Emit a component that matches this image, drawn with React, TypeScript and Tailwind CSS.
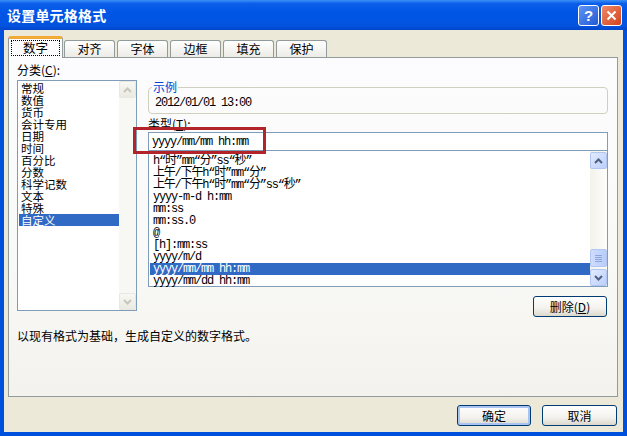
import type { ReactNode } from 'react'

const cjk = "font-['Noto_Sans_CJK_SC',sans-serif]"
const mono = "font-['Liberation_Mono','Noto_Sans_CJK_SC',monospace] tracking-[-1.2px]"

const categories = ['常规', '数值', '货币', '会计专用', '日期', '时间', '百分比', '分数', '科学记数', '文本', '特殊', '自定义']

const formats = [
  'h“时”mm“分”ss“秒”',
  '上午/下午h“时”mm“分”',
  '上午/下午h“时”mm“分”ss“秒”',
  'yyyy-m-d h:mm',
  'mm:ss',
  'mm:ss.0',
  '@',
  '[h]:mm:ss',
  'yyyy/m/d',
  'yyyy/mm/mm hh:mm',
  'yyyy/mm/dd hh:mm',
]

const tabs = ['对齐', '字体', '边框', '填充', '保护']

// small bold chevron used on the scroll arrows
function Chevron({ up, disabled }: { up?: boolean; disabled?: boolean }) {
  return (
    <svg width="9" height="6" viewBox="0 0 9 6">
      <path
        d={up ? 'M1 5 L4.5 1.5 L8 5' : 'M1 1 L4.5 4.5 L8 1'}
        fill="none"
        stroke={disabled ? '#c9c7ba' : '#4d6185'}
        strokeWidth="2"
      />
    </svg>
  )
}

function ArrowButton({ up, disabled }: { up?: boolean; disabled?: boolean }) {
  return (
    <div
      className={
        disabled
          ? 'w-[17px] h-[17px] flex items-center justify-center rounded-[2px] border border-[#e8e7e0] bg-[linear-gradient(180deg,#f8f8f4,#eae9e2)]'
          : 'w-[17px] h-[17px] flex items-center justify-center rounded-[2px] border border-[#b2c6f3] bg-[linear-gradient(135deg,#e2ebfe,#bccffa)]'
      }
    >
      <Chevron up={up} disabled={disabled} />
    </div>
  )
}

function XpButton({ children, primary, className = '' }: { children: ReactNode; primary?: boolean; className?: string }) {
  return (
    <button
      className={`h-[21px] rounded-[3px] border border-[#003c74] bg-[linear-gradient(180deg,#ffffff_0%,#f3f2ee_60%,#dcd8cc_100%)] flex items-center justify-center text-[12px] leading-[12px] ${
        primary ? 'shadow-[inset_0_0_0_2px_#aac3f0]' : ''
      } ${className}`}
    >
      {children}
    </button>
  )
}

function TitleBar() {
  return (
    <div className="h-[30px] shrink-0 flex items-center pl-[7px] pr-[5px] bg-[linear-gradient(180deg,#3d8ff7_0%,#0a5ee9_12%,#0055e5_45%,#0353e0_85%,#0045c9_100%)]">
      <span className={`${cjk} text-[14px] font-bold text-white tracking-[0.2px]`}>设置单元格格式</span>
      <div className="ml-auto flex gap-[2px]">
        <div className="w-[21px] h-[21px] rounded-[3px] border border-white bg-[linear-gradient(135deg,#5e95f5,#2259d6)] flex items-center justify-center">
          <span className="font-['Liberation_Sans',sans-serif] font-bold text-[15px] leading-none text-white">?</span>
        </div>
        <div className="w-[21px] h-[21px] rounded-[3px] border border-white bg-[linear-gradient(135deg,#f08a68,#d2421c)] flex items-center justify-center">
          <svg width="11" height="11" viewBox="0 0 11 11">
            <path d="M1.5 1.5 L9.5 9.5 M9.5 1.5 L1.5 9.5" stroke="#fff" strokeWidth="2" />
          </svg>
        </div>
      </div>
    </div>
  )
}

function Tabs() {
  return (
    <div className="h-[21px] flex items-end">
      {/* selected tab, overlaps the panel edge */}
      <div className="relative z-10 -mb-px w-[55px] h-[22px] rounded-t-[3px] border-x border-t-[3px] border-x-[#919b9c] border-t-[#f2a935] bg-[#fcfcfe] flex items-start justify-center pt-[1px]">
        <span className="w-[49px] h-[16px] border border-dotted border-black flex items-center justify-center text-[12.5px] leading-[12px]">
          数字
        </span>
      </div>
      <div className="flex gap-[2px] ml-[1px]">
        {tabs.map(t => (
          <div
            key={t}
            className="w-[51px] h-[17px] rounded-t-[3px] border-x border-t border-[#919b9c] bg-[linear-gradient(180deg,#ffffff,#ecebe6)] flex items-center justify-center text-[12px] leading-[12px]"
          >
            {t}
          </div>
        ))}
      </div>
    </div>
  )
}

function CategoryList() {
  return (
    <div className="w-[120px] h-[231px] border border-[#7f9db9] bg-white flex">
      <div className="flex-1 pt-[1px] pl-[1px]">
        {categories.map(c => (
          <div
            key={c}
            className={`h-[12px] leading-[12px] pl-[2px] text-[11.5px] ${c === '自定义' ? 'bg-[#316ac5] text-white' : ''}`}
          >
            {c}
          </div>
        ))}
      </div>
      <div className="w-[17px] flex flex-col justify-between bg-[#f7f7f3]">
        <ArrowButton up disabled />
        <ArrowButton disabled />
      </div>
    </div>
  )
}

function FormatList() {
  return (
    <div className="h-[136px] border-x border-b border-[#7f9db9] bg-white flex">
      <div className={`flex-1 pt-[4px] pl-[1px] ${mono}`}>
        {formats.map(f => (
          <div
            key={f}
            className={`h-[12px] leading-[12px] pl-[3px] text-[12px] ${f === 'yyyy/mm/mm hh:mm' ? 'bg-[#316ac5] text-white' : ''}`}
          >
            {f}
          </div>
        ))}
      </div>
      <div className="w-[17px] flex flex-col bg-[linear-gradient(90deg,#f3f2ec,#fdfdfa)] pt-[1px]">
        <ArrowButton up />
        <div className="flex-1" />
        <div className="w-[17px] h-[18px] rounded-[2px] border border-[#b2c6f3] bg-[linear-gradient(90deg,#cfdcfc,#b9cdf9)] flex flex-col items-center justify-center gap-[1px]">
          <div className="w-[7px] h-px bg-[#8ca5dc]" />
          <div className="w-[7px] h-px bg-[#8ca5dc]" />
          <div className="w-[7px] h-px bg-[#8ca5dc]" />
          <div className="w-[7px] h-px bg-[#8ca5dc]" />
        </div>
        <div className="h-[2px]" />
        <ArrowButton />
      </div>
    </div>
  )
}

export default function App() {
  return (
    <div className={`w-[627px] h-[436px] flex flex-col bg-[#0050de] overflow-hidden text-black ${cjk}`}>
      <TitleBar />
      <div className="flex-1 mx-[4px] mb-[4px] bg-[#ece9d8] flex flex-col pl-[4px] pr-[5px] pt-[6px]">
        <Tabs />

        <div className="relative h-[340px] border border-[#919b9c] bg-[linear-gradient(180deg,#fcfcfe_0%,#f9f9f7_60%,#f3f2ed_100%)] pl-[8px] pt-[6px]">
          <div className="flex gap-[11px]">
            {/* category column */}
            <div className="flex flex-col gap-[4px]">
              <div className="h-[12px] leading-[12px] text-[12px]">
                分类(<span className="underline">C</span>):
              </div>
              <CategoryList />
            </div>

            {/* type column */}
            <div className="w-[460px] flex flex-col">
              <fieldset className="mt-[17px] rounded-[4px] border border-[#d0d0bf] px-[6px] pt-[4px] pb-[4px]">
                <legend className="ml-[-3px] px-[1px] text-[12px] leading-[12px] text-[#0046d5]">示例</legend>
                <div className={`h-[12px] leading-[12px] text-[12px] ${mono}`}>2012/01/01 13:00</div>
              </fieldset>
              <div className="mt-[4px] h-[12px] leading-[12px] text-[12px]">
                类型(<span className="underline">T</span>):
              </div>
              <div className={`mt-[2px] h-[19px] border border-[#7f9db9] bg-white flex items-center pl-[3px] text-[12px] ${mono}`}>
                yyyy/mm/mm hh:mm
              </div>
              <FormatList />
              <XpButton className="mt-[9px] self-end mr-[1px] w-[74px]">
                删除(<span className="underline">D</span>)
              </XpButton>
            </div>
          </div>

          <p className="mt-[13px] h-[12px] leading-[12px] text-[12px]">以现有格式为基础，生成自定义的数字格式。</p>

          {/* red highlight around the type field */}
          <div className="absolute left-[124px] top-[69px] w-[133px] h-[27px] border-[3px] border-[#b3242a]" />
        </div>

        <div className="mt-[8px] flex justify-end gap-[11px] pr-[1px]">
          <XpButton primary className="w-[74px]">确定</XpButton>
          <XpButton className="w-[75px]">取消</XpButton>
        </div>
      </div>
    </div>
  )
}
